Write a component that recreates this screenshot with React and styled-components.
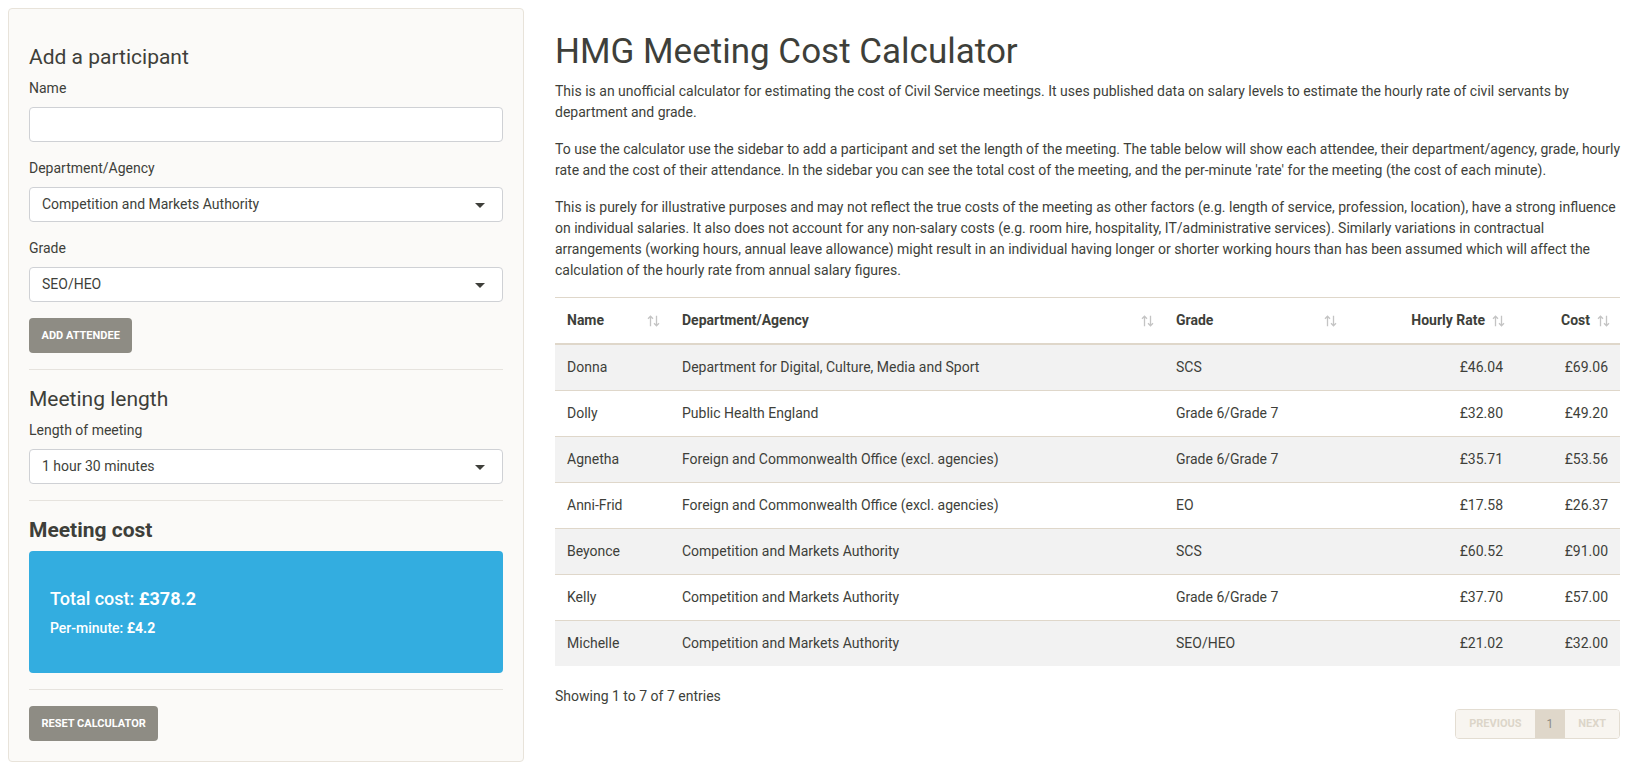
import React from "react";
import styled, { createGlobalStyle } from "styled-components";

const rows = [
  { name: "Donna", dept: "Department for Digital, Culture, Media and Sport", grade: "SCS", rate: "£46.04", cost: "£69.06" },
  { name: "Dolly", dept: "Public Health England", grade: "Grade 6/Grade 7", rate: "£32.80", cost: "£49.20" },
  { name: "Agnetha", dept: "Foreign and Commonwealth Office (excl. agencies)", grade: "Grade 6/Grade 7", rate: "£35.71", cost: "£53.56" },
  { name: "Anni-Frid", dept: "Foreign and Commonwealth Office (excl. agencies)", grade: "EO", rate: "£17.58", cost: "£26.37" },
  { name: "Beyonce", dept: "Competition and Markets Authority", grade: "SCS", rate: "£60.52", cost: "£91.00" },
  { name: "Kelly", dept: "Competition and Markets Authority", grade: "Grade 6/Grade 7", rate: "£37.70", cost: "£57.00" },
  { name: "Michelle", dept: "Competition and Markets Authority", grade: "SEO/HEO", rate: "£21.02", cost: "£32.00" },
];

const columns = [
  { key: "name", label: "Name", width: 115 },
  { key: "dept", label: "Department/Agency", width: 494 },
  { key: "grade", label: "Grade", width: 183 },
  { key: "rate", label: "Hourly Rate", width: 168, right: true },
  { key: "cost", label: "Cost", width: 105, right: true },
];

function SortIcon() {
  return (
    <SortMark width="13" height="12" viewBox="0 0 13 12" fill="none">
      <path d="M3.5 11.2V1.2M1 3.7l2.5-2.5L6 3.7" stroke="#c4c4c4" strokeWidth="1.3" />
      <path d="M9.5 0.8v10M7 8.3l2.5 2.5L12 8.3" stroke="#c4c4c4" strokeWidth="1.3" />
    </SortMark>
  );
}

function Select({ value }) {
  return (
    <SelectBox>
      {value}
      <Caret />
    </SelectBox>
  );
}

export default function App() {
  return (
    <>
      <GlobalStyle />
      <Page>
        <Well>
          <SectionTitle $first>Add a participant</SectionTitle>
          <FormGroup>
            <Label>Name</Label>
            <TextInput type="text" />
          </FormGroup>
          <FormGroup>
            <Label>Department/Agency</Label>
            <Select value="Competition and Markets Authority" />
          </FormGroup>
          <FormGroup>
            <Label>Grade</Label>
            <Select value="SEO/HEO" />
          </FormGroup>
          <Button>Add attendee</Button>
          <Divider />
          <SectionTitle>Meeting length</SectionTitle>
          <FormGroup $last>
            <Label>Length of meeting</Label>
            <Select value="1 hour 30 minutes" />
          </FormGroup>
          <Divider />
          <SectionTitle $bold>Meeting cost</SectionTitle>
          <CostBox>
            <TotalLine>
              Total cost: <strong>£378.2</strong>
            </TotalLine>
            <PerMinute>
              Per-minute: <strong>£4.2</strong>
            </PerMinute>
          </CostBox>
          <Divider />
          <Button>Reset calculator</Button>
        </Well>

        <Main>
          <Title>HMG Meeting Cost Calculator</Title>
          <Para>
            This is an unofficial calculator for estimating the cost of Civil Service meetings. It uses published data on
            salary levels to estimate the hourly rate of civil servants by department and grade.
          </Para>
          <Para>
            To use the calculator use the sidebar to add a participant and set the length of the meeting. The table below
            will show each attendee, their department/agency, grade, hourly rate and the cost of their attendance. In the
            sidebar you can see the total cost of the meeting, and the per-minute 'rate' for the meeting (the cost of each
            minute).
          </Para>
          <Para>
            This is purely for illustrative purposes and may not reflect the true costs of the meeting as other factors
            (e.g. length of service, profession, location), have a strong influence on individual salaries. It also does
            not account for any non-salary costs (e.g. room hire, hospitality, IT/administrative services). Similarly
            variations in contractual arrangements (working hours, annual leave allowance) might result in an individual
            having longer or shorter working hours than has been assumed which will affect the calculation of the hourly
            rate from annual salary figures.
          </Para>

          <Table>
            <colgroup>
              {columns.map((c) => (
                <col key={c.key} style={{ width: c.width }} />
              ))}
            </colgroup>
            <thead>
              <tr>
                {columns.map((c) => (
                  <Th key={c.key} $right={c.right}>
                    {c.label}
                    <SortIcon />
                  </Th>
                ))}
              </tr>
            </thead>
            <tbody>
              {rows.map((r) => (
                <Row key={r.name}>
                  {columns.map((c) => (
                    <Td key={c.key} $right={c.right}>
                      {r[c.key]}
                    </Td>
                  ))}
                </Row>
              ))}
            </tbody>
          </Table>

          <Info>Showing 1 to 7 of 7 entries</Info>
          <PagerRow>
            <Pager>
              <PageItem $disabled>Previous</PageItem>
              <PageItem $active>1</PageItem>
              <PageItem $disabled>Next</PageItem>
            </Pager>
          </PagerRow>
        </Main>
      </Page>
    </>
  );
}

const GlobalStyle = createGlobalStyle`
  * { box-sizing: border-box; }
  body {
    margin: 0;
    background: #fff;
    font-family: Roboto, "Helvetica Neue", Arial, sans-serif;
    font-size: 14px;
    line-height: 1.5;
    color: #3e3f3a;
  }
`;

const Page = styled.div`
  display: grid;
  grid-template-columns: 516px 1fr;
  column-gap: 31px;
  padding: 8px;
  align-items: start;
`;

const Well = styled.div`
  background: #fbfaf8;
  border: 1px solid #e8e3da;
  border-radius: 4px;
  padding: 20px;
`;

const SectionTitle = styled.h3`
  font-size: 21px;
  line-height: 26px;
  font-weight: ${(p) => (p.$bold ? 700 : 400)};
  margin: ${(p) => (p.$first ? "15px" : "0")} 0 8px;
  color: #3e3f3a;
`;

const FormGroup = styled.div`
  margin-bottom: ${(p) => (p.$last ? "0" : "16px")};
`;

const Label = styled.label`
  display: block;
  line-height: 21px;
  margin-bottom: 8px;
`;

const TextInput = styled.input`
  display: block;
  width: 100%;
  height: 35px;
  padding: 6px 12px;
  border: 1px solid #cfd1d5;
  border-radius: 4px;
  background: #fff;
  font: inherit;
  color: #3e3f3a;
`;

const SelectBox = styled.div`
  position: relative;
  height: 35px;
  padding: 0 12px;
  display: flex;
  align-items: center;
  border: 1px solid #cfd1d5;
  border-radius: 4px;
  background: #fff;
`;

const Caret = styled.span`
  position: absolute;
  right: 17px;
  top: 50%;
  margin-top: -2px;
  border-style: solid;
  border-width: 5px 5px 0 5px;
  border-color: #3e3f3a transparent transparent transparent;
`;

const Button = styled.button`
  display: inline-flex;
  align-items: center;
  height: 35px;
  padding: 0 12.5px;
  border: none;
  border-radius: 4px;
  background: #8e8c84;
  color: #fff;
  font-family: inherit;
  font-size: 11px;
  font-weight: 700;
  text-transform: uppercase;
`;

const Divider = styled.hr`
  border: 0;
  border-top: 1px solid #e6e3de;
  margin: 16px 0;
`;

const CostBox = styled.div`
  background: #33ade0;
  color: #fff;
  border-radius: 4px;
  padding: 37px 21px 37px;
`;

const TotalLine = styled.h4`
  font-size: 18px;
  line-height: 1.2;
  font-weight: 500;
  margin: 0 0 10px;
`;

const PerMinute = styled.h5`
  font-size: 14px;
  line-height: 1.2;
  font-weight: 500;
  margin: 0;
`;

const Main = styled.div`
  min-width: 0;
`;

const Title = styled.h1`
  font-size: 35px;
  line-height: 1.2;
  font-weight: 400;
  margin: 23px 0 8px;
`;

const Para = styled.p`
  line-height: 21px;
  margin: 0 -6px 16px 0;
`;

const Table = styled.table`
  width: 100%;
  table-layout: fixed;
  border-collapse: collapse;
  margin-top: 1px;
`;

const Th = styled.th`
  position: relative;
  padding: 12px 30px 12px 12px;
  line-height: 21px;
  font-weight: 700;
  text-align: ${(p) => (p.$right ? "right" : "left")};
  border-top: 1px solid #dfd7ca;
  border-bottom: 2px solid #dfd7ca;
`;

const SortMark = styled.svg`
  position: absolute;
  right: 10px;
  top: 50%;
  margin-top: -6px;
`;

const Row = styled.tr`
  &:nth-child(odd) td {
    background: #f2f2f2;
  }
`;

const Td = styled.td`
  padding: 12px;
  line-height: 21px;
  text-align: ${(p) => (p.$right ? "right" : "left")};
  border-top: 1px solid #dfd7ca;
`;

const Info = styled.div`
  margin-top: 20px;
  line-height: 21px;
`;

const PagerRow = styled.div`
  display: flex;
  justify-content: flex-end;
  margin-top: 2px;
`;

const Pager = styled.div`
  display: flex;
  border: 1px solid #e3ddd2;
  border-radius: 4px;
  overflow: hidden;
`;

const PageItem = styled.span`
  height: 28px;
  display: flex;
  align-items: center;
  padding: 0 ${(p) => (p.$active ? "12px" : "13px")};
  background: ${(p) => (p.$active ? "#dfd7ca" : "#f8f5f0")};
  color: ${(p) => (p.$active ? "#8e8c84" : "#dcd5c9")};
  font-size: ${(p) => (p.$active ? "12px" : "11px")};
  font-weight: ${(p) => (p.$active ? 400 : 700)};
  text-transform: uppercase;
`;
